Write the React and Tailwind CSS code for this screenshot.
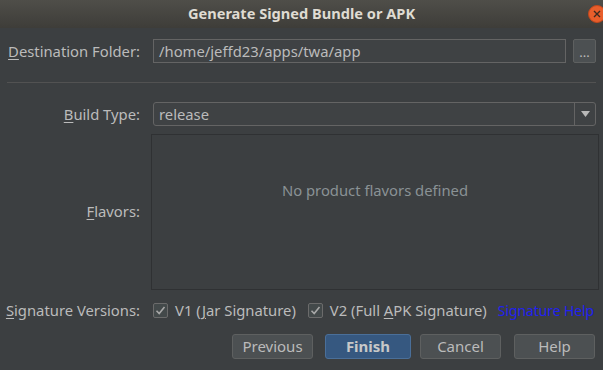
import React from "react";

const font = { fontFamily: "'Noto Sans', 'Open Sans', sans-serif" };

function Label({ first, rest, className = "" }) {
  return (
    <div className={`w-[141px] shrink-0 text-right pr-[1px] ${className}`}>
      <span className="underline underline-offset-2">{first}</span>
      {rest}
    </div>
  );
}

function Check({ children }) {
  return (
    <div className="flex items-center gap-[7px]">
      <div className="w-[15px] h-[15px] rounded-[2px] border border-[#6b6b6b] bg-[#43494a] flex items-center justify-center">
        <svg width="11" height="11" viewBox="0 0 11 11">
          <path d="M1.5 5.8 L4.2 8.5 L9.5 2" fill="none" stroke="#a8a8a8" strokeWidth="1.6" />
        </svg>
      </div>
      <span>{children}</span>
    </div>
  );
}

function Btn({ children, primary, className = "" }) {
  return (
    <button
      className={`h-[25px] rounded-[3px] border text-[15px] ${
        primary
          ? "w-[86px] bg-[#365880] border-[#4a6f99] text-[#c8c8c8] font-bold"
          : "w-[81px] bg-[#4c5052] border-[#5e6060] text-[#bbbbbb]"
      } ${className}`}
    >
      {children}
    </button>
  );
}

export default function App() {
  return (
    <div className="w-[603px] h-[370px] bg-[#3c3f41] flex flex-col text-[14.8px] text-[#bbbbbb]" style={font}>
      <div className="relative h-[28px] shrink-0 flex items-center justify-center bg-gradient-to-b from-[#4f4e49] to-[#3e3d39]">
        <span className="font-bold text-[14.6px] text-[#dfdbd2]">Generate Signed Bundle or APK</span>
        <div className="absolute left-[588px] top-[5px] w-[18px] h-[18px] rounded-full bg-[#e85e2b] border border-[#c2471c] flex items-center justify-center">
          <svg width="8" height="8" viewBox="0 0 8 8">
            <path d="M1 1 L7 7 M7 1 L1 7" stroke="#3a2a20" strokeWidth="1.4" />
          </svg>
        </div>
      </div>

      <div className="flex items-center h-[24px] mt-[11px]">
        <Label first="D" rest="estination Folder:" />
        <div className="ml-[12px] w-[413px] h-[24px] border border-[#646464] bg-[#3f4244] flex items-center px-[5px] text-[#bbbbbb]">
          /home/jeffd23/apps/twa/app
        </div>
        <div className="ml-[7px] w-[23px] h-[24px] rounded-[2px] border border-[#5e6060] bg-[#4c5052] flex items-end justify-center pb-[3px] text-[13px] leading-none">
          ...
        </div>
      </div>

      <div className="mx-[7px] mt-[19px] h-px bg-[#525252]" />

      <div className="flex items-center h-[24px] mt-[19px]">
        <Label first="B" rest="uild Type:" />
        <div className="ml-[12px] w-[443px] h-[24px] border border-[#646464] rounded-[3px] bg-[#3f4244] flex items-stretch">
          <div className="flex-1 flex items-center px-[5px]">release</div>
          <div className="w-[21px] border-l border-[#646464] flex items-center justify-center">
            <svg width="9" height="6" viewBox="0 0 9 6">
              <path d="M0 0 L9 0 L4.5 6 Z" fill="#b8b8b8" />
            </svg>
          </div>
        </div>
      </div>

      <div className="flex items-center h-[156px] mt-[8px]">
        <Label first="F" rest="lavors:" className="mt-[-2px]" />
        <div className="ml-[10px] w-[448px] h-[156px] border border-[#2f3133] flex items-center justify-center pb-[44px] text-[#8a9295]">
          No product flavors defined
        </div>
      </div>

      <div className="flex items-center h-[20px] mt-[10px]">
        <Label first="S" rest="ignature Versions:" />
        <div className="ml-[12px] flex items-center gap-[12px]">
          <Check>
            V1 (<span className="underline underline-offset-2">J</span>ar Signature)
          </Check>
          <Check>
            V2 (Full <span className="underline underline-offset-2">A</span>PK Signature)
          </Check>
          <span className="text-[#2020f0] text-[14px] tracking-[-0.1px] ml-[-1px]">Signature Help</span>
        </div>
      </div>

      <div className="flex justify-end items-center mt-[14px] pr-[8px]">
        <Btn>Previous</Btn>
        <Btn primary className="ml-[12px]">Finish</Btn>
        <Btn className="ml-[9px]">Cancel</Btn>
        <Btn className="ml-[13px]">Help</Btn>
      </div>
    </div>
  );
}
